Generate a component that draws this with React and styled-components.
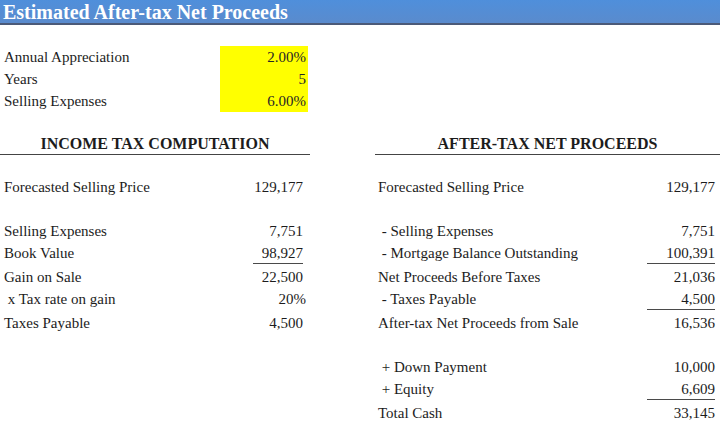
import styled, { createGlobalStyle } from "styled-components";

const GlobalStyle = createGlobalStyle`
    html, body {
        margin: 0;
        padding: 0;
        background: #ffffff;
    }
    body {
        font-family: "Liberation Serif", "Times New Roman", serif;
        font-size: 15px;
        color: #1c1c1c;
    }
`;

const inputs = [
    { label: "Annual Appreciation", value: "2.00%" },
    { label: "Years", value: "5" },
    { label: "Selling Expenses", value: "6.00%" },
];

// each entry is one spreadsheet row: [left label, left value, right label, right value]
const rows = [
    { left: ["Forecasted Selling Price", "129,177"], right: ["Forecasted Selling Price", "129,177"] },
    { spacer: true },
    { left: ["Selling Expenses", "7,751"], right: [" - Selling Expenses", "7,751"] },
    { left: ["Book Value", "98,927"], right: [" - Mortgage Balance Outstanding", "100,391"], rule: "both", tall: true },
    { left: ["Gain on Sale", "22,500"], right: ["Net Proceeds Before Taxes", "21,036"] },
    { left: [" x Tax rate on gain", "20%"], right: [" - Taxes Payable", "4,500"], leftPct: true, rule: "right", tall: true },
    { left: ["Taxes Payable", "4,500"], right: ["After-tax Net Proceeds from Sale", "16,536"] },
    { spacer: true },
    { right: [" + Down Payment", "10,000"] },
    { right: [" + Equity", "6,609"], rule: "right", tall: true },
    { right: ["Total Cash", "33,145"] },
];

const App = () => {
    return (
        <>
            <GlobalStyle />
            <Page>
                <TitleBar>Estimated After-tax Net Proceeds</TitleBar>
                <Spacer $h={21} />
                {inputs.map((item) => (
                    <Row key={item.label}>
                        <Label>{item.label}</Label>
                        <InputValue>{item.value}</InputValue>
                    </Row>
                ))}
                <Spacer $h={21} />
                <Row>
                    <Heading $col="1 / 3">INCOME TAX COMPUTATION</Heading>
                    <Heading $col="4 / 6">AFTER-TAX NET PROCEEDS</Heading>
                </Row>
                <Spacer $h={21} />
                {rows.map((row, i) =>
                    row.spacer ? (
                        <Spacer key={i} $h={22} />
                    ) : (
                        <Row key={i} $tall={row.tall}>
                            <Label>{row.left?.[0]}</Label>
                            <Value $pct={row.leftPct}>
                                {row.left && (
                                    <Figure $rule={row.rule === "both"} $w={50}>
                                        {row.left[1]}
                                    </Figure>
                                )}
                            </Value>
                            <div />
                            <Label>{row.right?.[0]}</Label>
                            <Value>
                                {row.right && (
                                    <Figure $rule={row.rule === "both" || row.rule === "right"} $w={68}>
                                        {row.right[1]}
                                    </Figure>
                                )}
                            </Value>
                        </Row>
                    )
                )}
            </Page>
        </>
    );
};

const Page = styled.div`
    width: 720px;
    height: 427px;
    overflow: hidden;
    display: flex;
    flex-direction: column;
`;

const TitleBar = styled.div`
    height: 23px;
    line-height: 24px;
    padding-left: 3px;
    background: linear-gradient(to bottom, #4f8fdb, #5a8bcd);
    border-bottom: 2px solid #4b5a78;
    color: #ffffff;
    font-size: 20px;
    font-weight: bold;
    white-space: nowrap;
    flex: none;
`;

const Spacer = styled.div`
    height: ${(p) => p.$h}px;
    flex: none;
`;

const Row = styled.div`
    display: grid;
    grid-template-columns: 220px 88px 67px 270px 75px;
    height: ${(p) => (p.$tall ? 24 : 22)}px;
    flex: none;
    line-height: 22px;
    white-space: pre;
`;

const Label = styled.div`
    padding-left: 3px;
    &:first-child {
        padding-left: 4px;
    }
`;

const Value = styled.div`
    display: flex;
    justify-content: flex-end;
    align-items: flex-start;
    padding-right: ${(p) => (p.$pct ? 2 : 5)}px;
`;

const Figure = styled.span`
    display: inline-block;
    min-width: ${(p) => p.$w}px;
    text-align: right;
    line-height: 20px;
    padding-top: 1px;
    border-bottom: 1px solid ${(p) => (p.$rule ? "#4a4a4a" : "transparent")};
`;

const InputValue = styled.div`
    background: #ffff00;
    text-align: right;
    padding-right: 2px;
    color: #262626;
`;

const Heading = styled.div`
    grid-column: ${(p) => p.$col};
    text-align: center;
    font-weight: bold;
    font-size: 16px;
    border-bottom: 1px solid #444444;
    height: 21px;
    margin-right: ${(p) => (p.$col === "1 / 3" ? -2 : 0)}px;
`;

export default App;
